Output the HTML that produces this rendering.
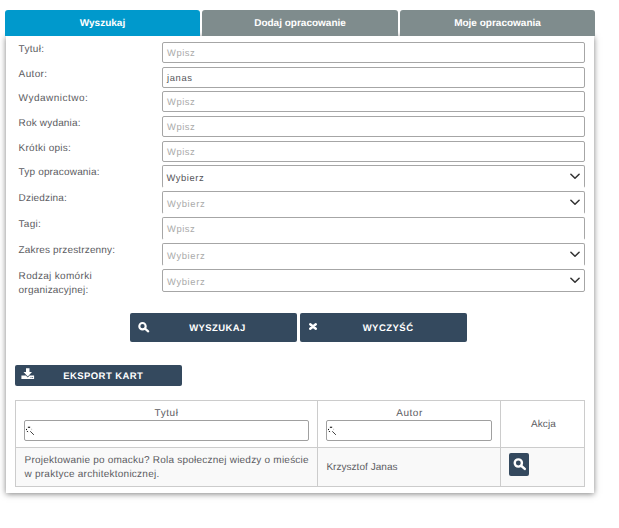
<!DOCTYPE html>
<html lang="pl">
<head>
<meta charset="utf-8">
<title>Opracowania</title>
<style>
*{box-sizing:border-box;margin:0;padding:0}
html,body{width:619px;height:528px;background:#fff;overflow:hidden}
body{font-family:"Liberation Sans",sans-serif;font-size:10px;color:#5c5c62;position:relative;text-rendering:geometricPrecision}
.tabs{position:absolute;left:5px;top:10px;width:590px;height:26px;list-style:none;z-index:1}
.tab{position:absolute;top:0;height:26px;line-height:27px;text-align:center;color:#fff;font-size:10px;font-weight:bold;border-radius:3px 3px 0 0;background:#7f8c8d;white-space:nowrap}
.tab.active{background:#0099cc}
.panel{position:absolute;left:6px;top:36px;width:588px;height:457px;background:#fff;box-shadow:0 1px 6px rgba(0,0,0,.5)}
.abs{position:absolute;white-space:nowrap}
.lbl{position:absolute;left:18.6px;font-size:10px;color:#5c5c62;line-height:14px;white-space:nowrap}
.inp{position:absolute;left:162px;width:423px;height:21px;border:1px solid #a6a6a6;border-radius:2px;background:#fff;font-size:9.4px;line-height:19px;padding-left:4px;white-space:nowrap}
.ph{color:#aaa}
.val{color:#55555a}
.sel{height:23px;line-height:23px;border-bottom-color:transparent}
.sel.last{border-bottom-color:#a6a6a6}
.nochev{line-height:21px}
.s1{padding-left:3.4px}
.chev{position:absolute;right:4px;top:6.5px}
.btn{position:absolute;background:#34495e;color:#fff;font-weight:bold;font-size:9.5px;border-radius:2px;white-space:nowrap}
.btn span{position:absolute;top:0}
.btn svg{position:absolute}
.grid{position:absolute;left:15px;top:400px;width:570px;height:87px;border:1px solid #ccc;background:#fff}
.grid .vl{position:absolute;top:0;width:1px;height:85px;background:#ccc}
.grid .hl{position:absolute;left:0;top:46px;width:568px;height:1px;background:#ccc}
.grid .row{position:absolute;left:0;top:47px;width:568px;height:38px;background:#f9f9f9}
.th{position:absolute;text-align:center;font-size:10px;line-height:14px;color:#5c5c62;white-space:nowrap}
.flt{position:absolute;height:21px;border:1px solid #a0a0a0;border-radius:2px;background:#fff}
.flt svg{position:absolute;left:1px;top:5px}
.td{position:absolute;font-size:10px;line-height:14px;color:#5c5c62;white-space:nowrap}
.act{position:absolute;left:509px;top:453px;width:20px;height:23px;background:#34495e;border-radius:2px}
</style>
</head>
<body>
<ul class="tabs">
  <li class="tab active" style="left:0;width:195px"><span id="t1">Wyszukaj</span></li>
  <li class="tab" style="left:197px;width:196px"><span id="t2">Dodaj opracowanie</span></li>
  <li class="tab" style="left:395px;width:195px"><span id="t3">Moje opracowania</span></li>
</ul>
<div class="panel"></div>
<form>
<label class="lbl" style="top:43px;letter-spacing:0.299px;"><span id="l1">Tytuł:</span></label>
<label class="lbl" style="top:68px;letter-spacing:0.362px;"><span id="l2">Autor:</span></label>
<label class="lbl" style="top:92px;letter-spacing:0.488px;"><span id="l3">Wydawnictwo:</span></label>
<label class="lbl" style="top:117px;letter-spacing:0.170px;"><span id="l4">Rok wydania:</span></label>
<label class="lbl" style="top:141.5px;letter-spacing:0.248px;"><span id="l5">Krótki opis:</span></label>
<label class="lbl" style="top:166px;letter-spacing:0.167px;"><span id="l6">Typ opracowania:</span></label>
<label class="lbl" style="top:192px;letter-spacing:0.177px;"><span id="l7">Dziedzina:</span></label>
<label class="lbl" style="top:217.6px;letter-spacing:0.244px;"><span id="l8">Tagi:</span></label>
<label class="lbl" style="top:244px;letter-spacing:0.159px;"><span id="l9">Zakres przestrzenny:</span></label>
<label class="lbl" style="top:270px;letter-spacing:0.321px;"><span id="l10">Rodzaj komórki</span></label>
<label class="lbl" style="top:284px;letter-spacing:0.206px;"><span id="l11">organizacyjnej:</span></label>
<div class="inp ph" style="top:42px;letter-spacing:0.542px;"><span id="i1">Wpisz</span></div>
<div class="inp val" style="top:67px;letter-spacing:0.645px;"><span id="i2">janas</span></div>
<div class="inp ph" style="top:91px;letter-spacing:0.542px;"><span id="i3">Wpisz</span></div>
<div class="inp ph" style="top:116px;letter-spacing:0.542px;"><span id="i4">Wpisz</span></div>
<div class="inp ph" style="top:141px;letter-spacing:0.542px;"><span id="i5">Wpisz</span></div>
<div class="inp sel val s1" style="top:165px;letter-spacing:0.570px;"><span id="s1">Wybierz</span><svg class="chev" viewBox="0 0 10 7" width="10" height="7"><path d="M0.9 1.2 L5 5.3 L9.1 1.2" fill="none" stroke="#333" stroke-width="1.5" stroke-linecap="round" stroke-linejoin="round"/></svg></div>
<div class="inp sel ph" style="top:191px;letter-spacing:0.636px;"><span id="s2">Wybierz</span><svg class="chev" viewBox="0 0 10 7" width="10" height="7"><path d="M0.9 1.2 L5 5.3 L9.1 1.2" fill="none" stroke="#333" stroke-width="1.5" stroke-linecap="round" stroke-linejoin="round"/></svg></div>
<div class="inp sel ph nochev" style="top:217px;letter-spacing:0.542px;"><span id="s3">Wpisz</span></div>
<div class="inp sel ph" style="top:243px;letter-spacing:0.636px;"><span id="s4">Wybierz</span><svg class="chev" viewBox="0 0 10 7" width="10" height="7"><path d="M0.9 1.2 L5 5.3 L9.1 1.2" fill="none" stroke="#333" stroke-width="1.5" stroke-linecap="round" stroke-linejoin="round"/></svg></div>
<div class="inp sel ph last" style="top:269px;letter-spacing:0.636px;"><span id="s5">Wybierz</span><svg class="chev" viewBox="0 0 10 7" width="10" height="7"><path d="M0.9 1.2 L5 5.3 L9.1 1.2" fill="none" stroke="#333" stroke-width="1.5" stroke-linecap="round" stroke-linejoin="round"/></svg></div>
<div class="btn" style="left:130px;top:313px;width:167px;height:29px;line-height:31.4px"><svg style="left:6px;top:7px" width="14" height="14" viewBox="0 0 14 14"><circle cx="6.5" cy="6.2" r="3.2" fill="none" stroke="#fff" stroke-width="2.1"/><path d="M9 8.7 L12.2 11.4" stroke="#fff" stroke-width="2.2" stroke-linecap="round"/></svg><span id="b1" style="left:59.2px;letter-spacing:0.413px;">WYSZUKAJ</span></div>
<div class="btn" style="left:300px;top:313px;width:167px;height:29px;line-height:31.4px"><svg style="left:8px;top:9px" width="10" height="9" viewBox="-5 -4.5 10 9"><path d="M-2.8 -2.3 L2.8 2.3 M2.8 -2.3 L-2.8 2.3" stroke="#fff" stroke-width="2.4" stroke-linecap="round"/></svg><span id="b2" style="left:62.7px;letter-spacing:0.467px;">WYCZYŚĆ</span></div>
<div class="btn" style="left:15px;top:365px;width:167px;height:21px;line-height:23px"><svg style="left:6px;top:3px" width="14" height="12" viewBox="6 3 14 12"><path d="M11 3.2 H14.5 V7.1 H17 L12.75 11.4 L8.5 7.1 H11 Z" fill="#fff"/><path d="M6.4 10.6 H10.9 L12.75 12.45 L14.6 10.6 H19.1 V14 H6.4 Z" fill="#fff"/><circle cx="17.6" cy="12.6" r=".5" fill="#34495e"/><circle cx="16" cy="12.6" r=".5" fill="#34495e"/></svg><span id="b3" style="left:48.3px;letter-spacing:0.413px;">EKSPORT KART</span></div>
</form>
<div class="grid">
  <div class="vl" style="left:301px"></div>
  <div class="vl" style="left:484px"></div>
  <div class="row"></div>
  <div class="hl"></div>
  <div class="vl" style="left:301px"></div>
  <div class="vl" style="left:484px"></div>
</div>
<div class="th" style="left:16px;width:301px;top:407px;letter-spacing:0.569px;"><span id="h1">Tytuł</span></div>
<div class="th" style="left:318px;width:183px;top:407px;letter-spacing:0.523px;"><span id="h2">Autor</span></div>
<div class="th" style="left:502px;width:83px;top:418px;letter-spacing:0.137px;"><span id="h3">Akcja</span></div>
<div class="flt" style="left:24px;top:420px;width:285px"><svg width="10" height="10" viewBox="0 0 10 10"><path d="M1.9 1.25 H4.1" stroke="#000" stroke-width="1"/><circle cx=".5" cy="3.5" r=".6" fill="#000"/><circle cx="1.4" cy="5.5" r=".6" fill="#000"/><circle cx="5.4" cy="3.4" r=".4" fill="#999"/><circle cx="3.1" cy="3.4" r="2.7" fill="none" stroke="#bbb" stroke-width=".4" stroke-dasharray=".8 1.4"/><path d="M4.3 5.3 L7.9 8.9" stroke="#111" stroke-width=".8"/></svg></div>
<div class="flt" style="left:326px;top:420px;width:166px"><svg width="10" height="10" viewBox="0 0 10 10"><path d="M1.9 1.25 H4.1" stroke="#000" stroke-width="1"/><circle cx=".5" cy="3.5" r=".6" fill="#000"/><circle cx="1.4" cy="5.5" r=".6" fill="#000"/><circle cx="5.4" cy="3.4" r=".4" fill="#999"/><circle cx="3.1" cy="3.4" r="2.7" fill="none" stroke="#bbb" stroke-width=".4" stroke-dasharray=".8 1.4"/><path d="M4.3 5.3 L7.9 8.9" stroke="#111" stroke-width=".8"/></svg></div>
<div class="td" style="left:24.5px;top:454px;letter-spacing:0.219px;"><span id="d1">Projektowanie po omacku? Rola społecznej wiedzy o mieście</span></div>
<div class="td" style="left:24.5px;top:468px;letter-spacing:0.245px;"><span id="d2">w praktyce architektonicznej.</span></div>
<div class="td" style="left:326.4px;top:460.5px;letter-spacing:0.036px;"><span id="d3">Krzysztof Janas</span></div>
<div class="act"><svg style="position:absolute;left:1.85px;top:3.3px" width="15.8" height="15.8" viewBox="0 0 14 14"><circle cx="6.5" cy="6.2" r="3.2" fill="none" stroke="#fff" stroke-width="2.1"/><path d="M9 8.7 L12.2 11.4" stroke="#fff" stroke-width="2.2" stroke-linecap="round"/></svg></div>
</body>
</html>
